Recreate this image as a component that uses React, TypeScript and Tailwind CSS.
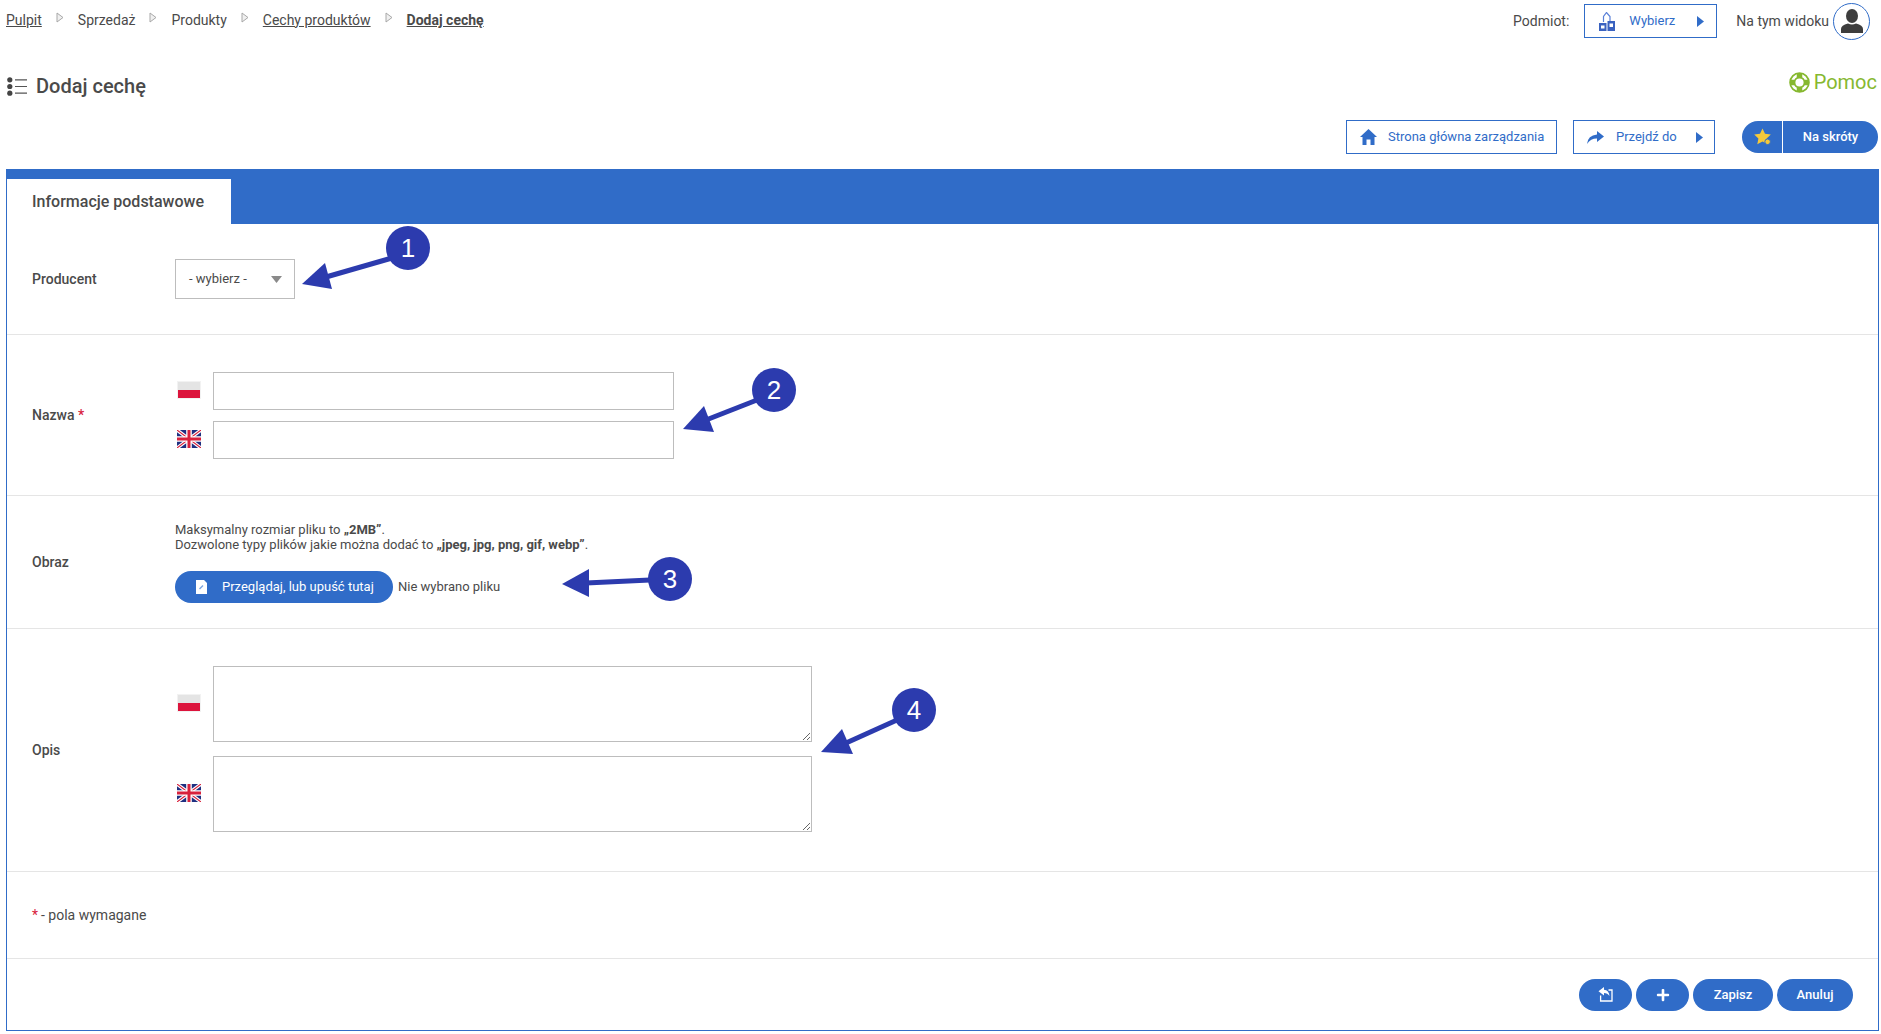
import { FaPlus } from "react-icons/fa";

const crumbs = [
  { label: "Pulpit", link: true },
  { label: "Sprzedaż", link: false },
  { label: "Produkty", link: false },
  { label: "Cechy produktów", link: true },
];

function Caret() {
  return (
    <svg width="7" height="11" viewBox="0 0 7 11" className="shrink-0">
      <path d="M0 0 L7 5.5 L0 11 Z" fill="#306cc8" />
    </svg>
  );
}

function CrumbSeparator() {
  return (
    <svg width="8" height="11" viewBox="0 0 8 11" className="mx-[14px] mb-[5px] shrink-0">
      <path d="M1 1 L7 5.5 L1 10 Z" fill="#f0f0f0" stroke="#a8a8a8" strokeWidth="1" />
    </svg>
  );
}

function PolishFlag() {
  return (
    <svg width="24" height="18" viewBox="0 0 24 18" className="block">
      <rect width="24" height="18" fill="#f2f2f2" />
      <rect x="1" y="1" width="22" height="8" fill="#e4e4e4" />
      <rect x="1" y="9" width="22" height="8" fill="#dc143c" />
    </svg>
  );
}

function BritishFlag() {
  return (
    <svg width="24" height="18" viewBox="0 0 24 18" className="block">
      <rect width="24" height="18" fill="#1f2f80" />
      <path d="M0 0 L24 18 M24 0 L0 18" stroke="#fff" strokeWidth="3.4" />
      <path d="M0 0 L24 18 M24 0 L0 18" stroke="#d8213c" strokeWidth="1.1" />
      <path d="M12 0 V18 M0 9 H24" stroke="#fff" strokeWidth="5.6" />
      <path d="M12 0 V18 M0 9 H24" stroke="#d8213c" strokeWidth="3" />
    </svg>
  );
}

function ListIcon() {
  return (
    <svg width="20" height="19" viewBox="0 0 20 19" className="shrink-0">
      <circle cx="2.8" cy="2.8" r="2.6" fill="#444" />
      <circle cx="2.8" cy="9.5" r="2.6" fill="#444" />
      <circle cx="2.8" cy="16.2" r="2.6" fill="#444" />
      <path d="M8 2.8 H20 M8 9.5 H20 M8 16.2 H20" stroke="#555" strokeWidth="1.2" />
    </svg>
  );
}

function BuildingIcon() {
  return (
    <svg width="16" height="19" viewBox="0 0 16 19" className="shrink-0">
      <path d="M4.5 10 V4.5 L7.5 0.5 L11 4.5 V9" fill="none" stroke="#5a80d8" strokeWidth="1.2" />
      <rect x="0" y="11" width="7.5" height="8" fill="#3a62c0" />
      <rect x="8.5" y="9" width="7.5" height="10" fill="#3a62c0" />
      <path d="M2 13.5 H5.5 V16.5 H2 Z M10.5 11.5 H14 V15 H10.5 Z" fill="#fff" />
    </svg>
  );
}

function HomeIcon() {
  return (
    <svg width="17" height="16" viewBox="0 0 17 16" className="shrink-0">
      <path d="M8.5 0 L17 8 H14.5 V16 H10.5 V10.5 H6.5 V16 H2.5 V8 H0 Z" fill="#306cc8" />
    </svg>
  );
}

function ShareIcon() {
  return (
    <svg width="17" height="13" viewBox="0 0 17 13" className="shrink-0">
      <path d="M10 0 L17 5.5 L10 11 V7.6 Q4 7.4 0 13 Q0.8 4.2 10 3.4 Z" fill="#306cc8" />
    </svg>
  );
}

function Avatar() {
  return (
    <div className="w-[37px] h-[37px] rounded-full border border-[#306cc8] flex items-center justify-center">
      <svg width="22" height="24" viewBox="0 0 22 24">
        <ellipse cx="11" cy="7" rx="6" ry="7" fill="#3d3d3d" />
        <path d="M0 24 V20 Q0 16 7 14.5 Q11 16.5 15 14.5 Q22 16 22 20 V24 Z" fill="#3d3d3d" />
      </svg>
    </div>
  );
}

function Lifebuoy() {
  return (
    <svg width="21" height="21" viewBox="0 0 21 21" className="shrink-0">
      <circle cx="10.5" cy="10.5" r="9.4" fill="none" stroke="#86b82f" strokeWidth="1.8" />
      <circle cx="10.5" cy="10.5" r="5" fill="none" stroke="#86b82f" strokeWidth="1.8" />
      <path d="M10.5 1 V5.5 M10.5 15.5 V20 M1 10.5 H5.5 M15.5 10.5 H20" stroke="#86b82f" strokeWidth="5.5" />
    </svg>
  );
}

function StarIcon() {
  return (
    <svg width="18" height="18" viewBox="0 0 18 18">
      <path d="M8.5 0.5 L11 5.7 L16.8 6.5 L12.6 10.4 L13.7 16.2 L8.5 13.4 L3.3 16.2 L4.4 10.4 L0.2 6.5 L6 5.7 Z" fill="#f5c93a" />
      <circle cx="13.6" cy="13.8" r="2.8" fill="#f5c93a" stroke="#306cc8" strokeWidth="1" />
    </svg>
  );
}

function FileIcon() {
  return (
    <svg width="11" height="14" viewBox="0 0 11 14">
      <path d="M0 0 H8 L11 3 V14 H0 Z" fill="#fff" />
      <path d="M3.5 9 L7 5.5" stroke="#7da6e0" strokeWidth="1.4" />
    </svg>
  );
}

function BackIcon() {
  return (
    <svg width="15" height="15" viewBox="0 0 15 15">
      <path d="M6 0 L0.5 4.2 L6 8.4 V6 Q9.5 6 11.5 9 Q11 3.4 6 2.8 Z" fill="#fff" />
      <path d="M2.6 8.5 V14 H14 V3 H10.5" fill="none" stroke="#fff" strokeWidth="1.3" />
    </svg>
  );
}

function FormRow({ label, required, height, children }: { label: string; required?: boolean; height: string; children: React.ReactNode }) {
  return (
    <div className={`flex items-center border-b border-[#e5e5e5] ${height}`}>
      <div className="w-[168px] pl-[25px] shrink-0 font-medium text-[14px] mt-[1px]">
        {label}
        {required && <span className="text-[#d8213c]"> *</span>}
      </div>
      {children}
    </div>
  );
}

function Annotation({ n, cx, cy, line, head }: { n: number; cx: number; cy: number; line: string; head: string }) {
  return (
    <g>
      <path d={line} stroke="#2c3bae" strokeWidth="5" fill="none" />
      <path d={head} fill="#2c3bae" />
      <circle cx={cx} cy={cy} r="22" fill="#2c3bae" />
      <text x={cx} y={cy + 9} textAnchor="middle" fill="#fff" fontSize="26" fontFamily="'Liberation Sans', sans-serif">
        {n}
      </text>
    </g>
  );
}

export default function App() {
  return (
    <div className="relative w-[1881px] h-[1034px] overflow-hidden bg-white text-[#4a4a4a] text-[14px] font-['Roboto',sans-serif]">
      <div className="flex items-center justify-between h-[42px] pl-[6px] pr-[11px]">
        <div className="flex items-center mb-[2px] text-[14px]">
          {crumbs.map((c) => (
            <div key={c.label} className="flex items-center">
              <span className={c.link ? "underline" : ""}>{c.label}</span>
              <CrumbSeparator />
            </div>
          ))}
          <span className="underline font-bold">Dodaj cechę</span>
        </div>
        <div className="flex items-center">
          <span>Podmiot:</span>
          <button className="flex items-center w-[133px] h-[34px] ml-[15px] pl-[14px] pr-[12px] border border-[#306cc8] text-[#306cc8] text-[13px]">
            <BuildingIcon />
            <span className="ml-[14px] flex-1 text-left">Wybierz</span>
            <Caret />
          </button>
          <span className="ml-[19px]">Na tym widoku</span>
          <div className="ml-[4px]">
            <Avatar />
          </div>
        </div>
      </div>

      <div className="flex justify-between items-center h-[78px] pl-[7px] pr-[4px]">
        <div className="flex items-center gap-[9px] mt-[10px]">
          <ListIcon />
          <h1 className="text-[20px] font-medium">Dodaj cechę</h1>
        </div>
        <div className="flex items-center gap-[4px] mt-[2px] text-[20px] text-[#86b82f]">
          <Lifebuoy />
          <span>Pomoc</span>
        </div>
      </div>

      <div className="flex justify-end items-center h-[34px] pr-[3px] text-[13px] text-[#306cc8]">
        <button className="flex items-center w-[211px] h-[34px] pl-[13px] border border-[#306cc8]">
          <HomeIcon />
          <span className="ml-[11px]">Strona główna zarządzania</span>
        </button>
        <button className="flex items-center w-[142px] h-[34px] ml-[16px] pl-[13px] pr-[11px] border border-[#306cc8]">
          <ShareIcon />
          <span className="ml-[12px] flex-1 text-left">Przejdź do</span>
          <Caret />
        </button>
        <div className="flex items-center w-[136px] h-[32px] ml-[27px] rounded-full bg-[#306cc8] text-white font-medium">
          <div className="flex items-center justify-center w-[41px] h-full border-r border-white pl-[2px]">
            <StarIcon />
          </div>
          <span className="flex-1 text-center">Na skróty</span>
        </div>
      </div>

      <div className="flex flex-col h-[862px] ml-[6px] mr-[2px] mt-[15px] border-x border-b border-[#306cc8]">
        <div className="h-[55px] pt-[10px] bg-[#306cc8] shrink-0">
          <div className="flex items-center w-[224px] h-[45px] pl-[25px] bg-white text-[16px] font-medium">Informacje podstawowe</div>
        </div>

        <FormRow label="Producent" height="h-[111px]">
          <div className="flex items-center justify-between w-[120px] h-[40px] pl-[13px] pr-[12px] border border-[#bdbdbd] text-[13px]">
            <span>- wybierz -</span>
            <svg width="11" height="7" viewBox="0 0 11 7">
              <path d="M0 0 H11 L5.5 7 Z" fill="#8a8a8a" />
            </svg>
          </div>
        </FormRow>

        <FormRow label="Nazwa" required height="h-[161px]">
          <div className="flex flex-col gap-[11px]">
            <div className="flex items-center">
              <div className="w-[38px] pl-[2px] mb-[2px]">
                <PolishFlag />
              </div>
              <input className="w-[461px] h-[38px] border border-[#bdbdbd] outline-none" />
            </div>
            <div className="flex items-center">
              <div className="w-[38px] pl-[2px] mb-[2px]">
                <BritishFlag />
              </div>
              <input className="w-[461px] h-[38px] border border-[#bdbdbd] outline-none" />
            </div>
          </div>
        </FormRow>

        <FormRow label="Obraz" height="h-[133px]">
          <div className="flex flex-col text-[13px]">
            <p className="leading-[15px]">
              Maksymalny rozmiar pliku to <b className="font-bold">„2MB”</b>.
              <br />
              Dozwolone typy plików jakie można dodać to <b className="font-bold">„jpeg, jpg, png, gif, webp”</b>.
            </p>
            <div className="flex items-center mt-[19px]">
              <button className="flex items-center w-[218px] h-[32px] pl-[21px] rounded-full bg-[#306cc8] text-white text-[13px]">
                <FileIcon />
                <span className="ml-[15px]">Przeglądaj, lub upuść tutaj</span>
              </button>
              <span className="ml-[5px]">Nie wybrano pliku</span>
            </div>
          </div>
        </FormRow>

        <FormRow label="Opis" height="h-[243px]">
          <div className="flex flex-col gap-[14px] mb-[2px]">
            <div className="flex items-center">
              <div className="w-[38px] pl-[2px] mb-[2px]">
                <PolishFlag />
              </div>
              <textarea className="block w-[599px] h-[76px] border border-[#bdbdbd] outline-none" />
            </div>
            <div className="flex items-center">
              <div className="w-[38px] pl-[2px] mb-[2px]">
                <BritishFlag />
              </div>
              <textarea className="block w-[599px] h-[76px] border border-[#bdbdbd] outline-none" />
            </div>
          </div>
        </FormRow>

        <div className="flex items-center h-[87px] pl-[25px] border-b border-[#e5e5e5] text-[14px]">
          <span className="text-[#d8213c] mr-[3px]">*</span> - pola wymagane
        </div>

        <div className="flex flex-1 items-center justify-end gap-[4px] pr-[25px] text-[13px] font-medium text-white">
          <button className="flex items-center justify-center w-[53px] h-[32px] rounded-full bg-[#306cc8]">
            <BackIcon />
          </button>
          <button className="flex items-center justify-center w-[53px] h-[32px] rounded-full bg-[#306cc8]">
            <FaPlus className="w-[14px] h-[14px]" />
          </button>
          <button className="w-[80px] h-[32px] rounded-full bg-[#306cc8]">Zapisz</button>
          <button className="w-[76px] h-[32px] rounded-full bg-[#306cc8]">Anuluj</button>
        </div>
      </div>

      {/* numbered callouts drawn over the form */}
      <svg width="1881" height="1034" className="absolute left-0 top-0 pointer-events-none">
        <Annotation n={1} cx={408} cy={248} line="M392 258 L326 277" head="M302 284 L325 263 L332 289 Z" />
        <Annotation n={2} cx={774} cy={390} line="M757 400 L706 420" head="M683 429 L704 406 L714 432 Z" />
        <Annotation n={3} cx={670} cy={579} line="M650 580 L586 583" head="M562 584 L589 569 L589 597 Z" />
        <Annotation n={4} cx={914} cy={710} line="M897 720 L846 743" head="M821 752 L842 729 L853 754 Z" />
      </svg>
    </div>
  );
}
